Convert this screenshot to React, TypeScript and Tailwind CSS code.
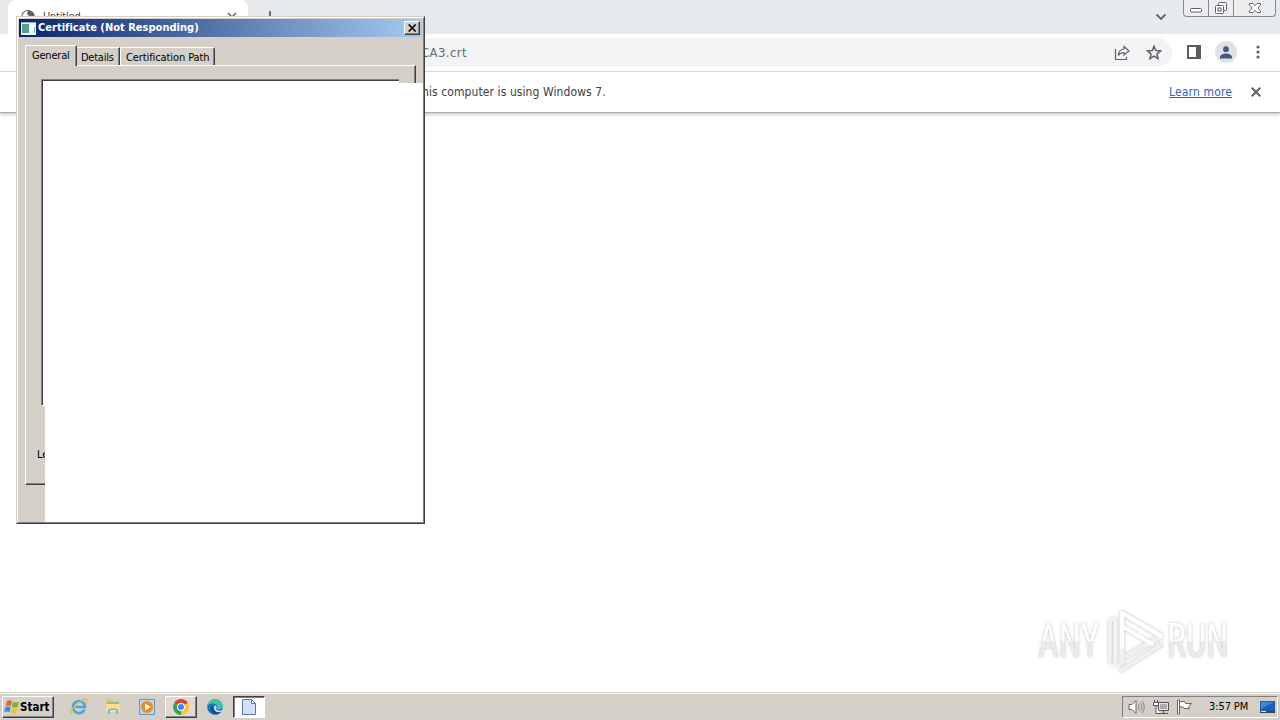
import type { ReactNode } from "react";

const raised =
  "border border-t-white border-l-white border-r-[#404040] border-b-[#404040] shadow-[inset_-1px_-1px_0_#808080]";

function WindowControls() {
  return (
    <div className="ml-auto mr-1 flex h-[17px] w-[93px] rounded-b-[4px] border border-t-0 border-[#85898e] bg-[#eceef0]">
      <div className="w-[25px] border-r border-[#85898e]">
        <svg width="24" height="16" viewBox="0 0 24 16" fill="#fff" stroke="#5b6067">
          <rect x="6.5" y="8.5" width="11" height="3.5" rx="1" />
        </svg>
      </div>
      <div className="w-[25px] border-r border-[#85898e]">
        <svg width="24" height="16" viewBox="0 0 24 16" fill="#fff" stroke="#5b6067">
          <rect x="9.5" y="2.5" width="8" height="8" rx="1" />
          <rect x="6.5" y="5.5" width="8" height="8" rx="1" />
          <rect x="9" y="8" width="3" height="3" />
        </svg>
      </div>
      <svg width="41" height="16" viewBox="0 0 41 16" fill="#fff" stroke="#5b6067">
        <path d="M15.5 3.500h3.500l2 2.200 2-2.200h3.500v1.500l-2.700 3 2.700 3v1.500H23l-2-2.200-2 2.200h-3.500V11l2.700-3-2.700-3z" />
      </svg>
    </div>
  );
}

function TabStrip() {
  return (
    <div className="flex h-[34px] bg-[#e7eaed]">
      <div className="ml-2 flex h-[34px] w-[240px] items-start rounded-t-lg bg-white pl-3 pt-[9px]">
        <svg width="16" height="16" viewBox="0 0 16 16">
          <circle cx="8" cy="8" r="7" fill="#5f6368" />
          <path d="M2 7c1-3 3-5 6-5l-1 3 2 2-2 3z" fill="#fff" />
        </svg>
        <span className="ml-[7px] mt-px text-[11px] leading-[14px] tracking-[-0.2px] text-[#45494d]">Untitled</span>
        <svg className="ml-auto mr-[11px] mt-[3px]" width="10" height="10" viewBox="0 0 10 10" stroke="#5f6368" strokeWidth="1.6">
          <path d="M1 1l8 8M9 1L1 9" />
        </svg>
      </div>
      <svg className="ml-[16px] mt-[11px]" width="12" height="12" viewBox="0 0 12 12" stroke="#5f6368" strokeWidth="1.8">
        <path d="M6 0v12M0 6h12" />
      </svg>
      <div className="ml-auto flex">
        <svg className="mr-[16px] mt-[13px]" width="12" height="8" viewBox="0 0 12 8" fill="none" stroke="#5f6368" strokeWidth="1.8">
          <path d="M1.500 1.500L6 6l4.500-4.500" />
        </svg>
        <WindowControls />
      </div>
    </div>
  );
}

function Toolbar() {
  return (
    <div className="flex h-[38px] items-center border-b border-[#d5d7da] bg-white">
      <div className="ml-[100px] flex h-[29px] w-[1072px] items-center rounded-r-full bg-[#f1f3f4] pl-[321px]">
        <span className="text-[13px] leading-4 tracking-[0.4px] text-[#686c71]">CA3.crt</span>
        <svg className="ml-auto mr-[16px]" width="16" height="16" viewBox="0 0 16 16" fill="none" stroke="#5f6368" strokeWidth="1.2">
          <path d="M1.500 4v10.500h11V12" />
          <path d="M10 1.500l5 4.500-5 4V7.500c-3 0-4.500 1-5.700 3C4.500 7 6 4.500 10 4z" />
        </svg>
        <svg className="mr-[10px]" width="16" height="16" viewBox="0 0 16 16" fill="none" stroke="#5f6368" strokeWidth="1.5">
          <path d="M8 1.300l1.800 4.300 4.700.4-3.600 3.100 1.100 4.600L8 11.200l-4 2.500 1.100-4.600L1.500 6l4.700-.4z" />
        </svg>
      </div>
      <svg className="-mt-px ml-[15px]" width="14" height="14" viewBox="0 0 14 14">
        <path d="M0 0h14v14H0zM2 2v10h7V2z" fill="#5a5e63" fillRule="evenodd" />
      </svg>
      <div className="-mt-px ml-[14px] flex size-[22px] items-center justify-center rounded-full bg-[#dee1e6]">
        <svg width="12" height="13" viewBox="0 0 12 13" fill="#4a5878">
          <circle cx="6" cy="3.200" r="2.900" />
          <path d="M0 12.500V11c0-2.300 3.500-3.500 6-3.500s6 1.200 6 3.500v1.500z" />
        </svg>
      </div>
      <svg className="-mt-px ml-[19px]" width="4" height="14" viewBox="0 0 4 14" fill="#5f6368">
        <circle cx="2" cy="2" r="1.600" />
        <circle cx="2" cy="7" r="1.600" />
        <circle cx="2" cy="12" r="1.600" />
      </svg>
    </div>
  );
}

function InfoBar() {
  return (
    <div className="flex h-[41px] items-center border-b border-[#a9abad] bg-white pl-[422px] text-[12px] shadow-[0_2px_3px_#cfcfcf]">
      <span className="tracking-[0.09px] text-[#3b3e42]">his computer is using Windows 7.</span>
      <a className="ml-auto tracking-[0.14px] text-[#2a66c0] underline underline-offset-1">Learn more</a>
      <svg className="ml-[19px] mr-[19px]" width="10" height="10" viewBox="0 0 10 10" stroke="#5f6368" strokeWidth="2">
        <path d="M.7.700l8.600 8.600M9.300.700L.7 9.300" />
      </svg>
    </div>
  );
}

function CertificateDialog() {
  return (
    <div className="absolute left-4 top-4 flex h-[508px] w-[409px] flex-col border border-b-[#404040] border-l-[#d4d0c8] border-r-[#404040] border-t-[#d4d0c8] bg-[#d4d0c8] text-[11px] text-black">
      <div className="flex flex-1 flex-col border border-b-[#808080] border-l-white border-r-[#808080] border-t-white">
        <div className="mx-px mt-px flex h-[18px] items-center bg-linear-to-r/srgb from-[#0a246a] to-[#a6caf0] pl-[2px] pr-[2px]">
          <svg width="15" height="13" viewBox="0 0 15 13">
            <path d="M0 0h15v13H0z" fill="#eef4f5" />
            <path d="M1 2h7v9H1z" fill="#5d9e91" />
            <path d="M9 3h4v7l-2-2-2 1z" fill="#fff" />
            <path d="M0 0h15v1H0zM13 5h1v6h-1z" fill="#8fb5c5" />
          </svg>
          <span className="ml-[2px] mt-px text-[11px] font-bold tracking-[0.02px] text-white">Certificate (Not Responding)</span>
          <span className={`ml-auto flex h-[14px] w-4 items-center justify-center bg-[#d4d0c8] ${raised}`}>
            <svg width="9" height="8" viewBox="0 0 9 8" stroke="#000" strokeWidth="1.6">
              <path d="M.7.500l7 7M7.700.500l-7 7" />
            </svg>
          </span>
        </div>

        <div className="ml-[7px] mt-2 flex h-5 items-end">
          <div className="z-10 -mb-px flex h-[21px] w-[52px] rounded-t-[2px] border-l border-r border-t border-l-white border-r-[#404040] border-t-white bg-[#d4d0c8] pl-[6px] pt-[2px] leading-[15px] tracking-[-0.2px] shadow-[inset_-1px_0_0_#808080]">
            General
          </div>
          <div className="flex h-[18px] w-[43px] border-r border-t border-r-[#404040] border-t-white pl-1 pt-[2px] leading-[15px] tracking-[-0.25px] shadow-[inset_-1px_0_0_#808080]">
            Details
          </div>
          <div className="flex h-[18px] w-[95px] rounded-t-[2px] border-l border-r border-t border-l-white border-r-[#404040] border-t-white pl-[5px] pt-[2px] leading-[15px] tracking-[-0.1px] shadow-[inset_-1px_0_0_#808080]">
            <span className="whitespace-nowrap">Certification Path</span>
          </div>
        </div>

        {/* only the left and top strips of the page have been painted */}
        <div className="ml-[7px] flex h-[18px] w-[391px] flex-col justify-end self-start border-r border-t border-r-[#404040] border-t-white shadow-[inset_1px_0_0_#fff,inset_-1px_0_0_#808080]">
          <div className="ml-4 h-[4px] w-[358px] border-l border-t border-[#808080]">
            <div className="h-full border-l border-t border-[#404040] bg-white" />
          </div>
        </div>
        <div className="flex min-h-0 flex-1">
          <div className="flex w-[27px] shrink-0 flex-col">
            <div className="ml-[7px] flex h-[402px] flex-col border-b border-l border-b-[#404040] border-l-white shadow-[inset_0_-1px_0_#808080]">
              <div className="ml-[15px] h-[323px] border-b border-l border-b-white border-l-[#808080]">
                <div className="h-full border-l border-[#404040] bg-white" />
              </div>
              <div className="ml-[11px] mt-[41px] w-2 overflow-hidden whitespace-nowrap leading-[15px]">Le</div>
            </div>
          </div>
          <div className="flex-1 bg-white" />
        </div>
      </div>
    </div>
  );
}

function WatermarkWord({ children }: { children: string }) {
  return (
    <span className="inline-block origin-left scale-x-[0.75] bg-linear-to-b from-white from-50% to-[#ebebeb] to-50% bg-clip-text text-transparent">
      {children}
    </span>
  );
}

function Watermark() {
  return (
    <div className="absolute left-[1038px] top-[607px] flex h-[68px] items-center font-[Roboto] text-[48px] drop-shadow-[0_0_1.5px_#c0c0c0]">
      <div className="w-[69px]">
        <WatermarkWord>ANY</WatermarkWord>
      </div>
      <svg width="60" height="66" viewBox="0 0 60 66" fill="none" strokeLinejoin="round" strokeLinecap="round">
        <path d="M3 54V13l5-3v47" stroke="#f6f6f6" strokeWidth="3" />
        <path d="M15 55V5l39 23-34 20" stroke="#f0f0f0" strokeWidth="5" />
        <path d="M15 39V5l39 23M15 18l30 18" stroke="#fff" strokeWidth="4" />
        <path d="M14 62l40-25" stroke="#f0f0f0" strokeWidth="4" />
      </svg>
      <div className="w-[64px]">
        <WatermarkWord>RUN</WatermarkWord>
      </div>
    </div>
  );
}

function TaskButton({ children, state = "flat" }: { children: ReactNode; state?: "flat" | "raised" | "pressed" }) {
  const look = {
    flat: "border border-transparent",
    raised: `bg-[#dedbd5] ${raised}`,
    pressed: "bg-white border border-t-[#404040] border-l-[#404040] border-r-white border-b-white shadow-[inset_1px_1px_0_#808080]",
  }[state];
  return <div className={`flex h-[22px] w-8 items-center justify-center ${look}`}>{children}</div>;
}

function Taskbar() {
  return (
    <div className="flex h-[28px] items-center border-t border-[#d4d0c8] bg-[#d4d0c8] text-[11px] text-black shadow-[inset_0_1px_0_#fff]">
      <div className={`ml-[2px] flex h-[22px] w-[52px] items-center pl-[1px] ${raised}`}>
        <svg width="16" height="16" viewBox="0 0 16 16">
          <path d="M3 2c2-1 3-1 5 .200L6.800 7.300C5 6.200 3.500 6.300 1.700 7z" fill="#e8622a" />
          <path d="M9 2.800c2 1 4 1 6 0l-1.300 5c-2 1-4 .9-5.900-.1z" fill="#76b83f" />
          <path d="M1.400 8.200c2-.8 3.500-.8 5.200.200L5.400 13.300C3.500 12.300 2 12.400 0 13z" fill="#3b8fd6" />
          <path d="M7.600 8.900c2 1 3.900 1 5.900.100l-1.200 4.800c-2 .9-4 .8-5.900-.2z" fill="#f8bf2b" />
        </svg>
        <span className="mt-[2px] text-[11.500px] font-bold">Start</span>
      </div>
      <div className="ml-[9px] flex items-center gap-[2px]">
        <TaskButton>
          <svg width="18" height="18" viewBox="0 0 18 18" fill="none">
            <path d="M14.500 11.500A6 6 0 1 1 15 9H5.500" stroke="#4ba6de" strokeWidth="2.600" />
            <path d="M2 15C-1 17 .5 12 5.500 7.500S16-.5 17 1.500c.4 1-.5 2.500-1.500 3.800" stroke="#e9bc3c" strokeWidth="1.200" />
          </svg>
        </TaskButton>
        <TaskButton>
          <svg width="16" height="17" viewBox="0 0 16 17">
            <path d="M1 3l1-2h5l1 2h6v10H1z" fill="#e8c565" />
            <path d="M2 4h12v3H2z" fill="#8cbf80" />
            <path d="M1 6h14v8H1z" fill="#f5df92" />
            <path d="M3 16v-4c0-2 10-2 10 0v4h-2v-4H5v4z" fill="#76b9de" />
          </svg>
        </TaskButton>
        <TaskButton>
          <svg width="16" height="16" viewBox="0 0 16 16">
            <path d="M.5.500h15v15H.5z" fill="#b5d8ed" stroke="#5b9bc4" />
            <circle cx="8" cy="8" r="6" fill="#f08a24" />
            <path d="M6 4.500v7L11.500 8z" fill="#fff" />
          </svg>
        </TaskButton>
        <TaskButton state="raised">
          <svg width="16" height="16" viewBox="0 0 16 16">
            <path d="M8 8L1.100 4A8 8 0 0 1 14.900 4z" fill="#dd4437" />
            <path d="M8 8l6.900-4A8 8 0 0 1 8 16z" fill="#f7c72c" />
            <path d="M8 8v8A8 8 0 0 1 1.100 4z" fill="#35a253" />
            <circle cx="8" cy="8" r="4" fill="#fff" />
            <circle cx="8" cy="8" r="3" fill="#4285f4" />
          </svg>
        </TaskButton>
        <TaskButton>
          <svg width="16" height="16" viewBox="0 0 16 16">
            <circle cx="8" cy="8" r="7.800" fill="#1673c1" />
            <path d="M.3 7C1 2.500 4 .2 8 .2c5 0 8 3.500 7.800 7C15.500 10 12 11 9.700 10c2-3-1-6-4.700-5.500C3 4.800 1.300 5.500.3 7z" fill="#42c2a4" />
            <path d="M6.500 7.500c-1 4 3 6.500 8 5C11 17 4 16 3.500 11c0-2 1-3.300 3-3.500z" fill="#124f96" />
            <path d="M7.500 6.500c2.500.5 2.500 2.500 1.500 3.500 1 2 4 2 6.500 1l-.8 1.500c-5 2-9-1-7.200-6z" fill="#d9e7ea" />
          </svg>
        </TaskButton>
        <TaskButton state="pressed">
          <svg width="14" height="16" viewBox="0 0 14 16">
            <path d="M.5.500h9l4 4v11H.5z" fill="#cfe2fa" stroke="#587aa8" />
            <path d="M9.500.500v4h4z" fill="#fff" stroke="#587aa8" />
          </svg>
        </TaskButton>
      </div>

      <div className="ml-auto mr-[2px] flex h-[22px] w-[156px] items-center border border-b-white border-l-[#808080] border-r-white border-t-[#808080] pl-[5px]">
        <svg width="17" height="16" viewBox="0 0 17 16" fill="#fff" stroke="#666">
          <path d="M1 5.500h3l4-4v13l-4-4H1z" />
          <path d="M10 5c1.500 2 1.500 4 0 6M12 3.500c2.500 3 2.500 6 0 9M14 2c3 4 3 8 0 12" fill="none" stroke="#777" strokeWidth=".9" />
        </svg>
        <svg className="ml-2" width="16" height="16" viewBox="0 0 16 16" fill="none" stroke="#555">
          <path d="M5.500 3.500h10v8h-10zM7 14.500h8M10.500 12v2" fill="#e4e4e4" />
          <path d="M7.500 5.500h6v4h-6z" fill="#aaa" stroke="#aaa" />
          <path d="M1.500 1v2M4.500 1v2M.5 3.500h5v3h-5zM3 7v7.500h4" fill="#fff" />
        </svg>
        <svg className="ml-[7px]" width="17" height="16" viewBox="0 0 17 16" fill="#fff" stroke="#666">
          <path d="M1.500 1v14h2V1zM3.500 2.500h5l1 2h6l-3 3.500 1 1.500H8l-1-1.500H3.500z" />
        </svg>
        <span className="ml-[16px] mt-[2px] whitespace-nowrap tracking-[-0.1px]">3:57 PM</span>
        <svg className="ml-auto mr-px" width="16" height="14" viewBox="0 0 16 14">
          <path d="M0 1h15v10H0z" fill="#1d5eb0" />
          <path d="M1 2h13L1 9z" fill="#3d8ad2" />
          <path d="M0 11h15v2H0z" fill="#36464f" />
          <path d="M1 11h5v1H1z" fill="#d7e7ed" />
        </svg>
      </div>
    </div>
  );
}

export default function App() {
  return (
    <div className="relative flex h-[720px] w-[1280px] flex-col overflow-hidden bg-white font-['DejaVu_Sans_Condensed','DejaVu_Sans',sans-serif] [font-stretch:condensed]">
      <TabStrip />
      <Toolbar />
      <InfoBar />
      <div className="flex-1" />
      <Taskbar />
      <CertificateDialog />
      <Watermark />
    </div>
  );
}
